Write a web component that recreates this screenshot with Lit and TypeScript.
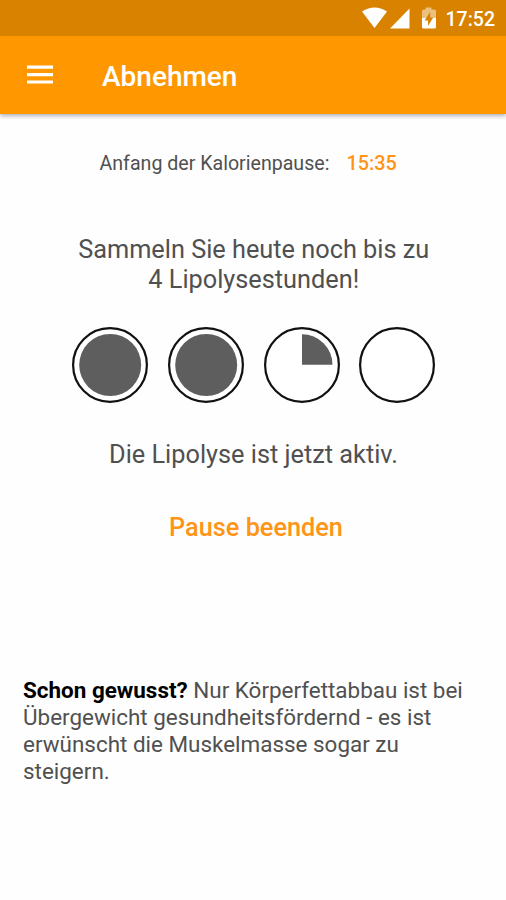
import { LitElement, html, svg, css } from "lit";
import { customElement } from "lit/decorators.js";

@customElement("app-root")
export class AppRoot extends LitElement {
  static styles = css`
    :host { display: block; width: 506px; height: 900px; overflow: hidden; background: #fefefe; font-family: Roboto, sans-serif; color: #505050; }
    .status { position: relative; z-index: 1; height: 36px; background: #d98200; display: flex; align-items: center; justify-content: flex-end; padding-right: 11px; box-sizing: border-box; color: #fff; }
    .status svg { display: block; margin-right: 10px; }
    .clock { font-size: 19.5px; font-weight: 500; line-height: 36px; padding-top: 3px; }
    .bar { height: 78px; background: #ff9800; display: flex; align-items: center; padding-left: 27px; box-shadow: 0 2px 4px rgba(60,60,80,.4); color: #fff; }
    .bar svg { display: block; }
    .title { font-size: 28px; font-weight: 500; margin-left: 49px; padding-top: 3px; line-height: 32px; }
    .start { display: flex; padding: 38px 0 0 99.5px; font-size: 19.6px; line-height: 24px; }
    .start b { color: #ff9416; font-weight: 500; margin-left: 17px; font-size: 19.9px; }
    .goal { padding: 59px 0 0 1.5px; text-align: center; font-size: 25.3px; line-height: 29.5px; }
    .hours { display: flex; gap: 17.7px; padding: 32px 0 0 71.2px; }
    .hours svg { display: block; }
    .active { padding: 35px 0 0 1px; text-align: center; font-size: 25.3px; line-height: 32px; }
    .end { display: block; margin: 41px auto 0; padding: 0 0 0 6px; border: 0; background: none; color: #ff9416; font: 500 25.3px/32px Roboto, sans-serif; }
    .fact { padding: 133px 23px 0; font-size: 22.45px; line-height: 26.9px; }
    .fact b { color: #000; }
  `;
  private hour(fill: number) {
    return html`<svg width="78" height="78" viewBox="0 0 78 78">
      <circle cx="39" cy="39" r="36.9" fill="#fff" stroke="#111" stroke-width="2.2" />
      ${fill === 1 ? svg`<circle cx="39.2" cy="39" r="31" fill="#5e5e5e" />` : null}
      ${fill === 0.25 ? svg`<path d="M39 38.7V8.2A30.5 30.5 0 0 1 69.5 38.7Z" fill="#5e5e5e" />` : null}
    </svg>`;
  }
  render() {
    return html`
      <div class="status">
        <svg width="74" height="22" viewBox="0 0 74 22" fill="#fff">
          <path d="M0 4.6Q12.5-3.4 25 4.6L12.5 21Z" />
          <path d="M28 21.5L47.5 1.5V21.5Z" />
          <path d="M63.6 .5H69.4V2.6H72.2Q74 2.6 74 4.2V10.8H60V4.2Q60 2.6 61.8 2.6H63.6Z" opacity=".5" />
          <path d="M60 10.8H74V20Q74 21.5 72.4 21.5H61.6Q60 21.5 60 20Z" />
          <path d="M68.2 4.8L62.6 13.5H66V19L71.2 10.6H68.2Z" fill="#d98200" />
        </svg>
        <span class="clock">17:52</span>
      </div>
      <div class="bar">
        <svg width="26" height="20"><path d="M0 2.1H26M0 9.6H26M0 17H26" stroke="#fff" stroke-width="3.2" /></svg>
        <div class="title">Abnehmen</div>
      </div>
      <div class="start"><span>Anfang der Kalorienpause:</span><b>15:35</b></div>
      <div class="goal">Sammeln Sie heute noch bis zu<br />4 Lipolysestunden!</div>
      <div class="hours">${[1, 1, 0.25, 0].map((f) => this.hour(f))}</div>
      <div class="active">Die Lipolyse ist jetzt aktiv.</div>
      <button class="end">Pause beenden</button>
      <div class="fact"><b>Schon gewusst?</b> Nur Körperfettabbau ist bei<br />Übergewicht gesundheitsfördernd - es ist<br />erwünscht die Muskelmasse sogar zu<br />steigern.</div>
    `;
  }
}
